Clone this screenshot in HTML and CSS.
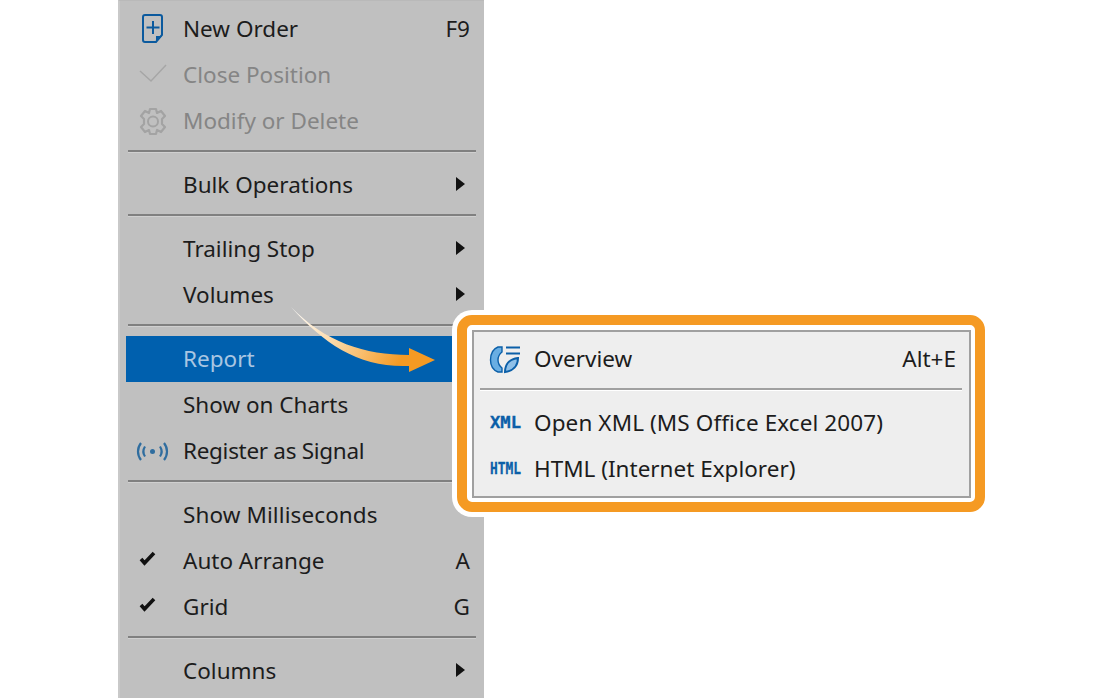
FILE: index.html
```html
<!DOCTYPE html>
<html lang="en">
<head>
<meta charset="utf-8">
<title>Context menu</title>
<link rel="stylesheet" href="styles.css">
</head>
<body>
<div class="stage">
  <div class="menu">
    <div class="row">
      <svg class="ico" viewBox="0 0 40 40"><path d="M12 6H27a2 2 0 0 1 2 2V26L23 33H12a2 2 0 0 1-2-2V8a2 2 0 0 1 2-2Z" fill="none" stroke="#0b5a9e" stroke-width="2"/><path d="M23 33V27H29Z" fill="#0b5a9e"/><path d="M20 12V25M13.500 18.500H26.500" stroke="#0b5a9e" stroke-width="2" fill="none"/></svg>
      <span class="label">New Order</span><span class="key">F9</span>
    </div>
    <div class="row off">
      <svg class="ico" viewBox="0 0 40 40"><path d="M7 16L18 26L33 10" fill="none" stroke="#a6a6a6" stroke-width="1.500"/></svg>
      <span class="label">Close Position</span>
    </div>
    <div class="row off">
      <svg class="ico" viewBox="0 0 40 40"><path d="M17 8H23L24 12L28 10L32 15L29 18V23L32 26L28 31L24 29L23 33H17L16 29L12 31L8 26L11 23V18L8 15L12 10L16 12Z" fill="none" stroke="#a3a3a3" stroke-width="2.200" stroke-linejoin="round"/><circle cx="20" cy="20.500" r="5" fill="none" stroke="#a3a3a3" stroke-width="2"/></svg>
      <span class="label">Modify or Delete</span>
    </div>
    <div class="sep"></div>
    <div class="row"><span class="ico"></span><span class="label">Bulk Operations</span><i class="more"></i></div>
    <div class="sep"></div>
    <div class="row"><span class="ico"></span><span class="label">Trailing Stop</span><i class="more"></i></div>
    <div class="row"><span class="ico"></span><span class="label">Volumes</span><i class="more"></i></div>
    <div class="sep"></div>
    <div class="row active"><span class="ico"></span><span class="label">Report</span></div>
    <div class="row"><span class="ico"></span><span class="label">Show on Charts</span></div>
    <div class="row">
      <svg class="ico" viewBox="0 0 40 40"><g fill="none" stroke="#2f6d9f" stroke-width="2.200"><path d="M8 12C4 17 4 24 8 29"/><path d="M12 15.500C10 18.500 10 22.500 12 25.500"/><path d="M27 15.500C29 18.500 29 22.500 27 25.500"/><path d="M31 12C35 17 35 24 31 29"/></g><circle cx="19.500" cy="20.500" r="2.500" fill="#2f6d9f"/></svg>
      <span class="label tight">Register as Signal</span>
    </div>
    <div class="sep"></div>
    <div class="row"><span class="ico"></span><span class="label wide">Show Milliseconds</span></div>
    <div class="row">
      <svg class="ico" viewBox="0 0 40 40"><path d="M8 18L11.500 22L21 12" fill="none" stroke="#111" stroke-width="3.600"/></svg>
      <span class="label">Auto Arrange</span><span class="key">A</span>
    </div>
    <div class="row">
      <svg class="ico" viewBox="0 0 40 40"><path d="M8 18L11.500 22L21 12" fill="none" stroke="#111" stroke-width="3.600"/></svg>
      <span class="label">Grid</span><span class="key">G</span>
    </div>
    <div class="sep"></div>
    <div class="row"><span class="ico"></span><span class="label">Columns</span><i class="more"></i></div>
  </div>

  <div class="callout">
    <div class="ring">
      <div class="submenu">
        <div class="row sub">
          <svg class="ico" viewBox="0 0 40 40"><path d="M13 8H17V13C14.500 15 13 18 13 21C13 24 14.500 27 17 29V33H13C8 31 5.500 27 5.500 21C5.500 15 8 10 13 8Z" fill="#69aee3" stroke="#0b5fa8" stroke-width="1.400"/><path d="M20 33C20 26 24 20 33 19C33 27 28 32 20 33Z" fill="#8fc0e8" stroke="#0b5fa8" stroke-width="2"/><path d="M21 8.500H35M21 14.500H35" stroke="#0b5fa8" stroke-width="2" fill="none"/></svg>
          <span class="label">Overview</span><span class="key">Alt+E</span>
        </div>
        <div class="sep sub-sep"></div>
        <div class="row sub">
          <svg class="ico" viewBox="0 0 40 40"><text class="tag" x="5" y="25" font-size="15" textLength="31" lengthAdjust="spacingAndGlyphs">XML</text></svg>
          <span class="label wide">Open XML (MS Office Excel 2007)</span>
        </div>
        <div class="row sub">
          <svg class="ico" viewBox="0 0 40 40"><text class="tag" x="5" y="25" font-size="16" textLength="31" lengthAdjust="spacingAndGlyphs">HTML</text></svg>
          <span class="label">HTML (Internet Explorer)</span>
        </div>
      </div>
    </div>
  </div>

  <svg class="pointer" viewBox="0 0 1100 698">
    <defs>
      <linearGradient id="fade" gradientUnits="userSpaceOnUse" x1="291" y1="307" x2="400" y2="362">
        <stop offset="0" stop-color="#ffffff"/>
        <stop offset="0.5" stop-color="#fbd39a"/>
        <stop offset="1" stop-color="#f59a23"/>
      </linearGradient>
    </defs>
    <path d="M291 307C325 342 365 355 409 355V348L435 360L409 372V366C360 368 325 345 291 307Z" fill="url(#fade)"/>
  </svg>
</div>
</body>
</html>
```
FILE: styles.css
```css
* { box-sizing: border-box; }
html, body { margin: 0; padding: 0; background: #fff; }
.stage {
  position: relative;
  width: 1100px;
  height: 698px;
  overflow: hidden;
  padding-left: 118px;
  font-family: "Noto Sans", "Open Sans", sans-serif;
  font-size: 22.5px;
  line-height: 30px;
  color: #1c1c1c;
}
.menu {
  width: 366px;
  height: 698px;
  background: #c0c0c0;
  border-left: 2px solid #c9c9c9;
  border-top: 1px solid #b9b9b9;
  padding: 5px 6px 0 6px;
}
.row {
  display: flex;
  align-items: center;
  height: 46px;
  padding-right: 8px;
}
.ico {
  flex: none;
  display: block;
  width: 40px;
  height: 40px;
  margin-left: 7px;
  margin-right: 10px;
  overflow: visible;
}
.label { flex: 1; white-space: nowrap; }
.key { flex: none; }
.tight { letter-spacing: -0.3px; }
.wide { letter-spacing: 0.1px; }
.off { color: #858585; }
.active { background: #0060ae; color: #a9c6e2; }
.more {
  flex: none;
  width: 0;
  height: 0;
  margin-right: 5px;
  margin-top: -3px;
  border-left: 9px solid #111;
  border-top: 7px solid transparent;
  border-bottom: 7px solid transparent;
}
.sep {
  height: 18px;
  padding-top: 6px;
  margin: 0 2px;
}
.sep::before {
  content: "";
  display: block;
  height: 2px;
  background: #808080;
  box-shadow: 0 1px 0 #d0d0d0;
}
.callout {
  position: absolute;
  left: 452px;
  top: 310px;
  width: 538px;
  height: 207px;
  padding: 5px;
  background: #fff;
  border-radius: 20px;
}
.ring {
  height: 100%;
  padding: 5px 4px 4px 5px;
  background: #fff;
  border: 10px solid #f59a23;
  border-radius: 15px;
}
.submenu {
  height: 100%;
  padding: 4px 0;
  background: #eee;
  border: 2px solid #a0a0a0;
}
.sub { padding-right: 13px; }
.sub .ico { margin-left: 11px; margin-right: 9px; }
.sub-sep { margin: 0 7px 0 6px; }
.sub-sep::before { background: #a0a0a0; box-shadow: 0 1px 0 #fff; }
.tag {
  font-family: "DejaVu Sans Mono", monospace;
  font-weight: 700;
  fill: #0b5fa8;
  stroke: #0b5fa8;
  stroke-width: 0.3px;
}
.pointer {
  position: absolute;
  left: 0;
  top: 0;
  width: 1100px;
  height: 698px;
  pointer-events: none;
}
```
